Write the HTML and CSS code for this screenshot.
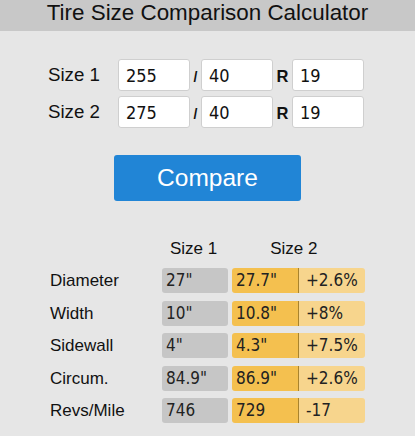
FILE: index.html
```html
<!DOCTYPE html>
<html lang="en">
<head>
    <meta charset="UTF-8">
    <title>Tire Size Comparison Calculator</title>
    <link rel="stylesheet" href="styles.css">
</head>
<body>
<h1 class="title">Tire Size Comparison Calculator</h1>

<div class="sizes">
    <div class="size-row">
        <label class="size-label" for="w1">Size 1</label>
        <input class="size-input" id="w1" type="text" value="255">
        <span class="sep">/</span>
        <input class="size-input" type="text" value="40">
        <span class="sep sep-r">R</span>
        <input class="size-input" type="text" value="19">
    </div>
    <div class="size-row">
        <label class="size-label" for="w2">Size 2</label>
        <input class="size-input" id="w2" type="text" value="275">
        <span class="sep">/</span>
        <input class="size-input" type="text" value="40">
        <span class="sep sep-r">R</span>
        <input class="size-input" type="text" value="19">
    </div>
</div>

<div class="actions">
    <button class="compare" id="compare">Compare</button>
</div>

<div class="results">
    <div class="res-head">
        <span class="head-1">Size 1</span>
        <span class="head-2">Size 2</span>
    </div>
    <div class="res-row">
        <span class="res-label">Diameter</span>
        <span class="cell cell-1">27"</span>
        <span class="cell cell-2">27.7"</span>
        <span class="cell cell-d">+2.6%</span>
    </div>
    <div class="res-row">
        <span class="res-label">Width</span>
        <span class="cell cell-1">10"</span>
        <span class="cell cell-2">10.8"</span>
        <span class="cell cell-d">+8%</span>
    </div>
    <div class="res-row">
        <span class="res-label">Sidewall</span>
        <span class="cell cell-1">4"</span>
        <span class="cell cell-2">4.3"</span>
        <span class="cell cell-d">+7.5%</span>
    </div>
    <div class="res-row">
        <span class="res-label">Circum.</span>
        <span class="cell cell-1">84.9"</span>
        <span class="cell cell-2">86.9"</span>
        <span class="cell cell-d">+2.6%</span>
    </div>
    <div class="res-row">
        <span class="res-label">Revs/Mile</span>
        <span class="cell cell-1">746</span>
        <span class="cell cell-2">729</span>
        <span class="cell cell-d">-17</span>
    </div>
</div>
</body>
</html>
```

FILE: styles.css
```css
*{
    margin: 0;
    padding: 0;
    box-sizing: border-box;
}
body{
    background-color: #e6e6e6;
    font-family: "Liberation Sans", Arial, sans-serif;
    color: #111;
}
.title{
    height: 31px;
    background-color: #c8c8c8;
    font-size: 22.4px;
    font-weight: normal;
    line-height: 25px;
    text-align: center;
    color: #111;
}

/* size inputs */
.sizes{
    margin-top: 28px;
    padding-left: 48px;
    display: flex;
    flex-direction: column;
    gap: 5px;
}
.size-row{
    display: flex;
    align-items: center;
}
.size-label{
    width: 70px;
    font-size: 18.7px;
}
.size-input{
    width: 72px;
    height: 32px;
    padding: 0 7px;
    border: 1px solid #cfcfcf;
    border-radius: 3px;
    background: #fff;
    font-family: "DejaVu Sans Condensed", "DejaVu Sans", sans-serif;
    font-stretch: condensed;
    font-size: 18px;
    color: #111;
    outline: none;
}
.sep{
    width: 11px;
    padding-top: 3px;
    text-align: center;
    font-size: 14px;
    font-weight: bold;
}
.sep-r{
    width: 19px;
    padding-top: 2px;
    font-size: 16.5px;
}

/* button */
.actions{
    margin-top: 27px;
    display: flex;
    justify-content: center;
}
.compare{
    width: 187px;
    height: 46px;
    border: none;
    border-radius: 3px;
    background-color: #2185d6;
    color: #fff;
    font-family: "Liberation Sans", Arial, sans-serif;
    font-size: 24.5px;
}

/* results */
.results{
    margin-top: 38px;
    padding-left: 50px;
}
.res-head{
    display: flex;
    font-size: 17px;
    line-height: 20px;
    margin-bottom: 9px;
}
.head-1{
    margin-left: 120px;
}
.head-2{
    margin-left: 53px;
}
.res-row{
    display: flex;
    align-items: baseline;
    height: 25px;
    margin-bottom: 7.5px;
}
.res-label{
    width: 112px;
    font-size: 17px;
}
.cell{
    width: 66px;
    height: 25px;
    padding-left: 4px;
    font-family: "DejaVu Sans Condensed", "DejaVu Sans", sans-serif;
    font-stretch: condensed;
    font-size: 17px;
    line-height: 25px;
    color: #222;
}
.cell-1{
    margin-right: 4px;
    background-color: #c6c6c6;
    border-radius: 3px;
}
.cell-2{
    background-color: #f4c04f;
    border-radius: 3px 0 0 3px;
}
.cell-d{
    width: 67px;
    background-color: #f7d58d;
    border-left: 1px solid #a8832e;
    border-radius: 0 3px 3px 0;
    padding-left: 7px;
}
```
